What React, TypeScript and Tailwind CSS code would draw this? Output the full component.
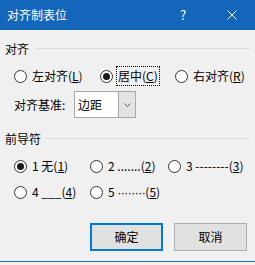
import React from "react";

function Radio({ checked }: { checked?: boolean }) {
  return (
    <span className="w-[13px] h-[13px] rounded-full border border-[#333333] bg-white flex items-center justify-center shrink-0">
      {checked && <span className="w-[7px] h-[7px] rounded-full bg-[#1a1a1a]" />}
    </span>
  );
}

function Option({ checked, children, width, focus }: { checked?: boolean; children: React.ReactNode; width?: string; focus?: boolean }) {
  return (
    <div className={`flex items-center gap-[3px] ${width ?? ""}`}>
      <Radio checked={checked} />
      <span className={`leading-[16px] px-[1px] py-[1px] border border-dotted ${focus ? "border-black" : "border-transparent"}`}>
        {children}
      </span>
    </div>
  );
}

function SectionTitle({ label }: { label: string }) {
  return (
    <div className="flex items-center h-[17px] pl-[5px] pr-[6px] gap-[6px]">
      <span className="leading-[16px]">{label}</span>
      <div className="flex-1 h-px bg-[#dcdcdc]" />
    </div>
  );
}

export default function App() {
  return (
    <div className="w-[255px] h-[265px] bg-[#f0f0f0] flex flex-col text-[12px] text-black font-['Microsoft_YaHei_UI','Noto_Sans_CJK_SC',sans-serif] overflow-hidden">
      {/* title bar */}
      <div className="h-[30px] bg-[#1366ba] flex items-center text-white shrink-0">
        <span className="pl-[7px] text-[12px] flex-1">对齐制表位</span>
        <span className="w-[10px] text-[13px] mr-[37px]">?</span>
        <svg width="10" height="10" viewBox="0 0 10 10" className="mr-[18px]">
          <path d="M0.5 0.5 L9.5 9.5 M9.5 0.5 L0.5 9.5" stroke="white" strokeWidth="1" />
        </svg>
      </div>

      <div className="mt-[10px]">
        <SectionTitle label="对齐" />
      </div>

      <div className="mt-[9px] h-[20px] flex items-center pl-[14px]">
        <Option width="w-[86px]">
          左对齐(<u>L</u>)
        </Option>
        <Option checked focus width="w-[75px]">
          居中(<u>C</u>)
        </Option>
        <Option>
          右对齐(<u>R</u>)
        </Option>
      </div>

      <div className="mt-[5px] h-[27px] flex items-center pl-[14px]">
        <span className="w-[60px]">对齐基准:</span>
        <div className="w-[62px] h-[27px] bg-white border border-[#a8a8a8] flex">
          <span className="flex-1 pl-[3px] leading-[25px]">边距</span>
          <div className="w-[17px] bg-[#e3e3e3] border-l border-[#a8a8a8] flex items-center justify-center">
            <svg width="7" height="4" viewBox="0 0 7 4">
              <path d="M0.5 0.5 L3.5 3.5 L6.5 0.5" stroke="#555" fill="none" strokeWidth="1" />
            </svg>
          </div>
        </div>
      </div>

      <div className="mt-[12px]">
        <SectionTitle label="前导符" />
      </div>

      <div className="mt-[9px] h-[20px] flex items-center pl-[14px]">
        <Option checked width="w-[76px]">
          1 无(<u>1</u>)
        </Option>
        <Option width="w-[78px]">
          2 .......(<u>2</u>)
        </Option>
        <Option>
          3 --------(<u>3</u>)
        </Option>
      </div>

      <div className="mt-[6px] h-[20px] flex items-center pl-[14px]">
        <Option width="w-[76px]">
          4 ___(<u>4</u>)
        </Option>
        <Option>
          5 <span className="font-['Liberation_Sans',sans-serif] tracking-[-0.5px]">········</span>(<u>5</u>)
        </Option>
      </div>

      <div className="mt-[21px] flex justify-end gap-[11px] pr-[8px]">
        <button className="w-[73px] h-[28px] bg-[#e1e1e1] border-2 border-[#0078d7] leading-[24px]">确定</button>
        <button className="w-[73px] h-[28px] bg-[#e1e1e1] border border-[#adadad] leading-[26px]">取消</button>
      </div>

      <div className="mt-[10px] h-px bg-[#1f6fb5]" />
    </div>
  );
}
